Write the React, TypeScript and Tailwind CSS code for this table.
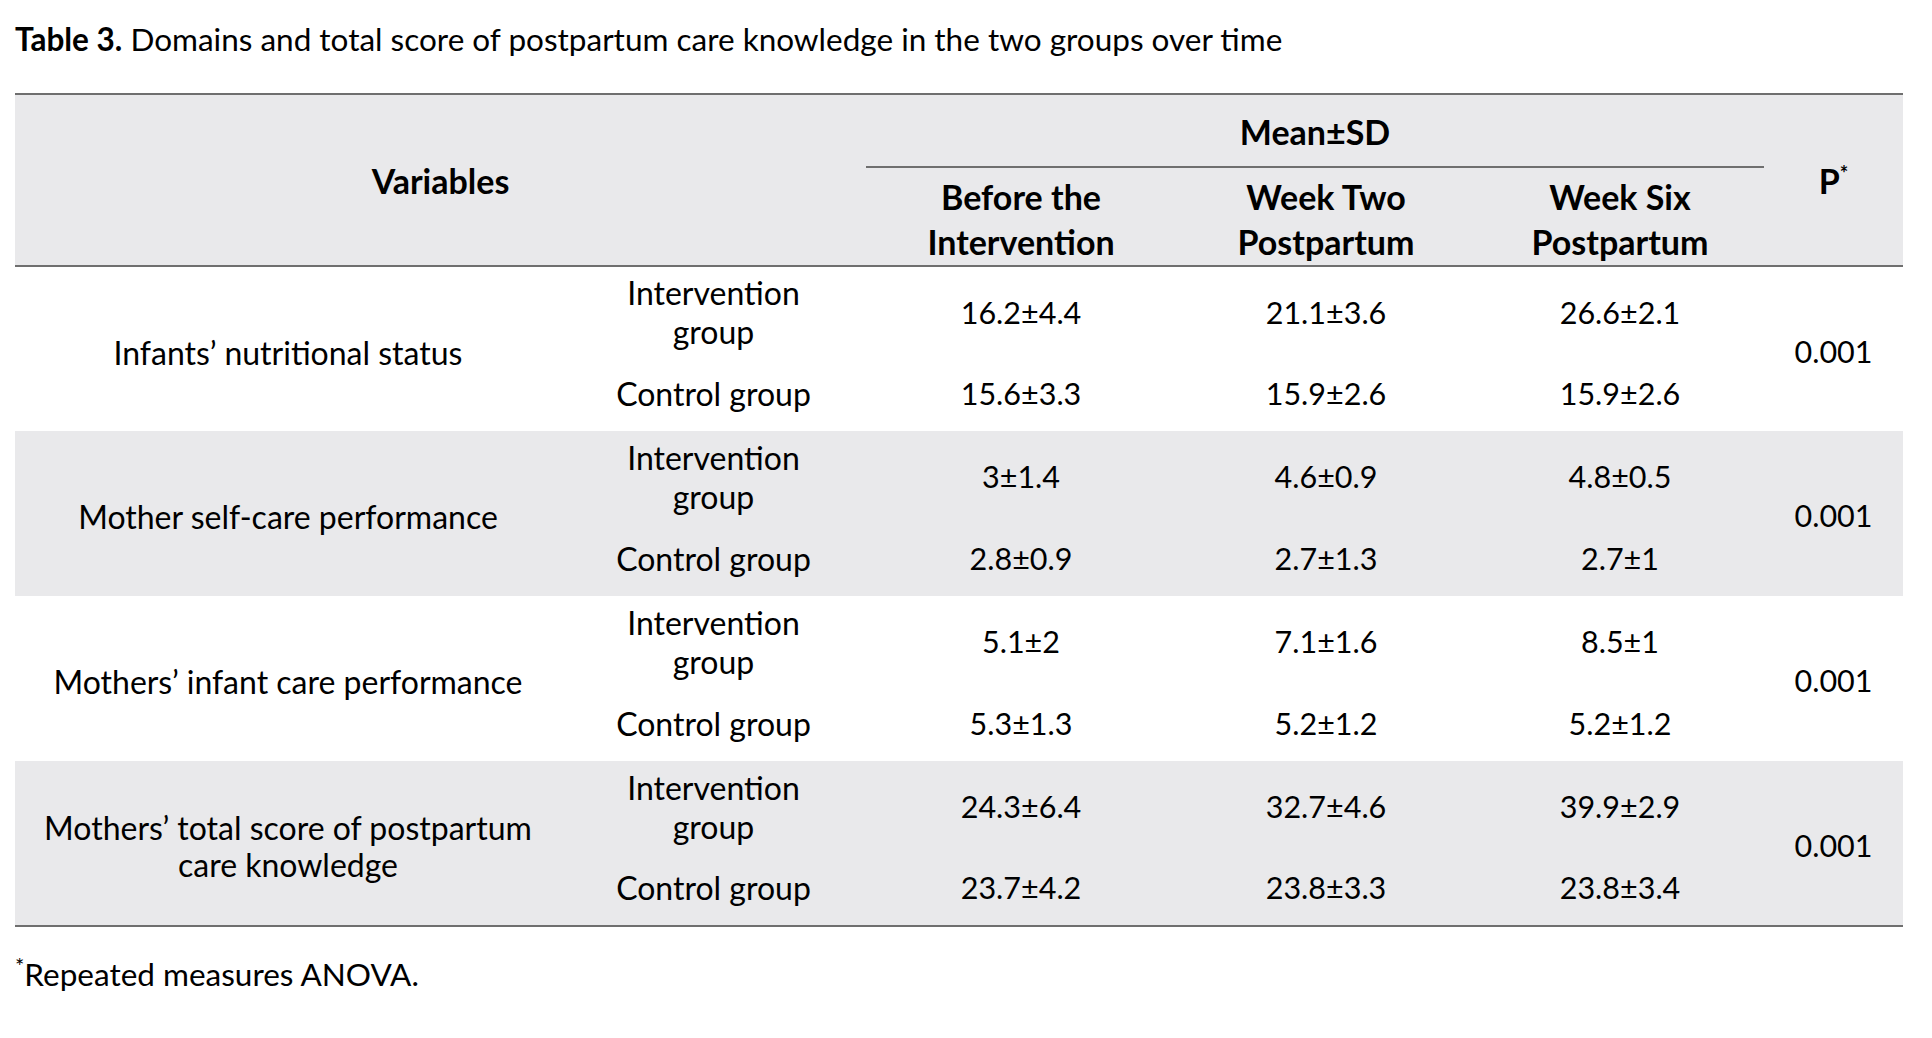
import React from "react";

type Row = {
  name: string[];
  intervention: string[];
  control: string[];
  p: string;
  shaded: boolean;
};

const rows: Row[] = [
  {
    name: ["Infants’ nutritional status"],
    intervention: ["16.2±4.4", "21.1±3.6", "26.6±2.1"],
    control: ["15.6±3.3", "15.9±2.6", "15.9±2.6"],
    p: "0.001",
    shaded: false,
  },
  {
    name: ["Mother self-care performance"],
    intervention: ["3±1.4", "4.6±0.9", "4.8±0.5"],
    control: ["2.8±0.9", "2.7±1.3", "2.7±1"],
    p: "0.001",
    shaded: true,
  },
  {
    name: ["Mothers’ infant care performance"],
    intervention: ["5.1±2", "7.1±1.6", "8.5±1"],
    control: ["5.3±1.3", "5.2±1.2", "5.2±1.2"],
    p: "0.001",
    shaded: false,
  },
  {
    name: ["Mothers’ total score of postpartum", "care knowledge"],
    intervention: ["24.3±6.4", "32.7±4.6", "39.9±2.9"],
    control: ["23.7±4.2", "23.8±3.3", "23.8±3.4"],
    p: "0.001",
    shaded: true,
  },
];

const App: React.FC = () => {
  return (
    <div className="min-h-screen bg-white text-black font-['Lato',sans-serif]">
      <h1 className="pl-[15px] pt-[21px] text-[31.5px] leading-[36px]">
        <b>Table 3.</b> Domains and total score of postpartum care knowledge in the two groups over time
      </h1>

      <table className="ml-[15px] mt-[36px] w-[1888px] table-fixed border-collapse">
        <colgroup>
          <col className="w-[546px]" />
          <col className="w-[305px]" />
          <col className="w-[310px]" />
          <col className="w-[300px]" />
          <col className="w-[288px]" />
          <col className="w-[139px]" />
        </colgroup>
        <thead className="bg-[#e9e9eb] font-bold text-[34px]">
          <tr className="h-[73px] border-t-2 border-[#6f6f6f]">
            <th colSpan={2} rowSpan={2} className="text-center align-middle">
              Variables
            </th>
            <th colSpan={3} className="border-b-2 border-[#6f6f6f] text-center align-middle pt-[2px]">
              Mean±SD
            </th>
            <th rowSpan={2} className="text-center align-middle">
              P<sup className="text-[20px] -top-[13px]">*</sup>
            </th>
          </tr>
          <tr className="h-[99px] border-b-2 border-[#6f6f6f] leading-[45px]">
            <th className="text-center align-middle pt-[4px]">
              Before the
              <br />
              Intervention
            </th>
            <th className="text-center align-middle pt-[4px]">
              Week Two
              <br />
              Postpartum
            </th>
            <th className="text-center align-middle pt-[4px]">
              Week Six
              <br />
              Postpartum
            </th>
          </tr>
        </thead>
        <tbody className="leading-[39px] text-[32px]">
          {rows.map((row, i) => (
            <React.Fragment key={i}>
              <tr className={`h-[93px] ${row.shaded ? "bg-[#e9e9eb]" : "bg-white"}`}>
                <td rowSpan={2} className="text-center align-middle leading-[37px] pt-[6px]">
                  {row.name.map((line) => (
                    <div key={line}>{line}</div>
                  ))}
                </td>
                <td className="text-center align-middle pb-[2px]">
                  Intervention
                  <br />
                  group
                </td>
                {row.intervention.map((v, j) => (
                  <td key={j} className="text-center align-middle text-[30.5px] pb-[2px]">
                    {v}
                  </td>
                ))}
                <td rowSpan={2} className="text-center align-middle pt-[4px] text-[30.5px]">
                  {row.p}
                </td>
              </tr>
              <tr
                className={`h-[72px] ${row.shaded ? "bg-[#e9e9eb]" : "bg-white"} ${
                  i === rows.length - 1 ? "border-b-2 border-[#6f6f6f]" : ""
                }`}
              >
                <td className="text-center align-middle pb-[4px]">Control group</td>
                {row.control.map((v, j) => (
                  <td key={j} className="text-center align-middle text-[30.5px] pb-[4px]">
                    {v}
                  </td>
                ))}
              </tr>
            </React.Fragment>
          ))}
        </tbody>
      </table>

      <p className="pl-[15px] pt-[29px] text-[31.5px] leading-[36px]">
        <sup className="text-[22px] -top-[12px]">*</sup>Repeated measures ANOVA.
      </p>
    </div>
  );
};

export default App;
